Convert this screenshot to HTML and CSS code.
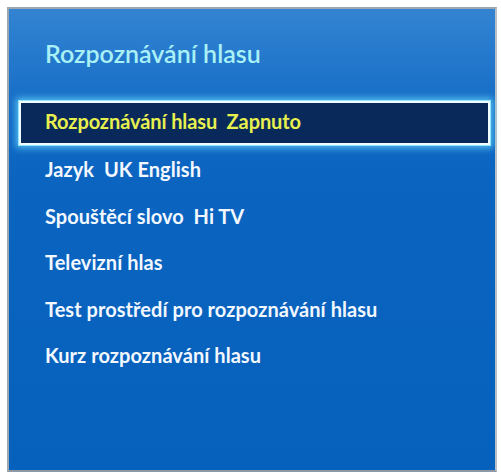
FILE: index.html
```html
<!DOCTYPE html>
<html lang="cs">
<head>
<meta charset="utf-8">
<title>Rozpoznávání hlasu</title>
<link rel="stylesheet" href="styles.css">
</head>
<body>
<div class="panel">
  <h1 class="title">Rozpoznávání hlasu</h1>
  <ul class="menu">
    <li class="item selected">Rozpoznávání hlasu&nbsp; Zapnuto</li>
    <li class="item">Jazyk&nbsp; UK English</li>
    <li class="item">Spouštěcí slovo&nbsp; Hi TV</li>
    <li class="item">Televizní hlas</li>
    <li class="item">Test prostředí pro rozpoznávání hlasu</li>
    <li class="item">Kurz rozpoznávání hlasu</li>
  </ul>
</div>
</body>
</html>
```

FILE: styles.css
```css
html, body {
  margin: 0;
  padding: 0;
  background: #ffffff;
}

body {
  font-family: Lato, "Open Sans", "Liberation Sans", sans-serif;
}

.panel {
  box-sizing: border-box;
  margin: 7px 0 0 7px;
  width: 490px;
  height: 465px;
  border: 2px solid #9ba7b3;
  border-right-color: #b9c0c7;
  border-bottom-color: #8c99a6;
  background: linear-gradient(180deg, #3383d1 0px, #2176cb 60px, #146cc6 100px, #0a64c0 170px, #0661bd 100%);
  display: flex;
  flex-direction: column;
}

.title {
  margin: 0;
  padding: 30px 0 0 36px;
  height: 60px;
  box-sizing: border-box;
  font-size: 25px;
  font-weight: 600;
  line-height: 28px;
  color: #a9f1f6;
  letter-spacing: 0;
}

.menu {
  list-style: none;
  margin: 32px 0 0 10px;
  padding: 0;
  display: flex;
  flex-direction: column;
}

.item {
  box-sizing: border-box;
  height: 46.5px;
  line-height: 38px;
  padding-left: 26px;
  font-size: 20px;
  font-weight: 700;
  color: #f3f8ff;
  letter-spacing: 0.05px;
  white-space: nowrap;
}

.item.selected {
  width: 471px;
  height: 44px;
  line-height: 37px;
  margin-bottom: 5px;
  padding-left: 24px;
  border: 2px solid #effdff;
  background: #08295a;
  color: #e8f04e;
  letter-spacing: -0.1px;
  box-shadow: 0 0 0 1px #8fe6ff, 0 0 7px 3px rgba(110, 220, 255, 0.75);
}
```
